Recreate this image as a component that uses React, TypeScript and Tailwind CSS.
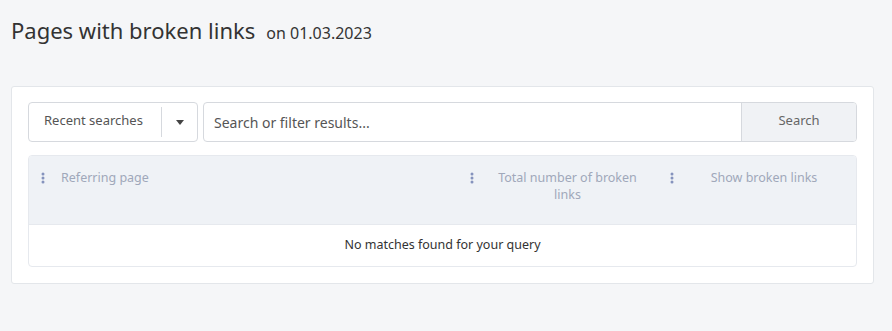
import React from 'react';

const Dots: React.FC = () => (
  <svg width="4" height="12" viewBox="0 0 4 12" className="shrink-0 mt-[3px]">
    <circle cx="2" cy="2" r="1.5" fill="#8593bd" />
    <circle cx="2" cy="6" r="1.5" fill="#8593bd" />
    <circle cx="2" cy="10" r="1.5" fill="#8593bd" />
  </svg>
);

const App: React.FC = () => {
  return (
    <div
      className="min-h-screen bg-[#f5f6f8] pl-[11px] pr-[18px] pt-[14px] text-[#333]"
      style={{ fontFamily: '"Noto Sans", "Open Sans", sans-serif' }}
    >
      <h1 className="flex items-baseline gap-[11px] leading-[32px]">
        <span className="text-[22px] text-[#333]">Pages with broken links</span>
        <span className="text-[16px] text-[#333]">on 01.03.2023</span>
      </h1>

      <div className="mt-[37px] bg-white border border-[#e3e6ea] rounded-[3px] px-[16px] pt-[15px] pb-[16px]">
        <div className="flex gap-[5px] h-[40px]">
          <div className="w-[170px] flex items-center border border-[#d6d9de] rounded-[4px] bg-white">
            <span className="flex-1 pl-[15px] pb-[2px] text-[13px] text-[#555]">Recent searches</span>
            <span className="w-px h-[30px] bg-[#d6d9de]" />
            <span className="w-[35px] flex justify-center">
              <svg width="8" height="5" viewBox="0 0 8 5">
                <path d="M0 0 L8 0 L4 5 Z" fill="#444" />
              </svg>
            </span>
          </div>
          <div className="flex-1 flex border border-[#d6d9de] rounded-[4px] overflow-hidden">
            <input
              className="flex-1 px-[10px] text-[14px] text-[#555] placeholder:text-[#555] outline-none"
              placeholder="Search or filter results..."
            />
            <button className="w-[115px] bg-[#f0f2f5] border-l border-[#d6d9de] text-[13px] text-[#666] pb-[2px]">
              Search
            </button>
          </div>
        </div>

        <div className="mt-[13px] border border-[#e6e9ee] rounded-[4px] overflow-hidden">
          <div className="flex h-[68px] bg-[#eff2f6] text-[12.5px] leading-[17px] text-[#a0a8ba] pt-[13px]">
            <div className="w-[432px] flex gap-[16px] pl-[12px]">
              <Dots />
              <span>Referring page</span>
            </div>
            <div className="w-[200px] flex pl-[9px]">
              <Dots />
              <span className="flex-1 text-center px-[14px]">Total number of broken links</span>
            </div>
            <div className="flex-1 flex pl-[9px]">
              <Dots />
              <span className="flex-1 text-center pr-[2px]">Show broken links</span>
            </div>
          </div>
          <div className="h-[42px] flex items-center justify-center border-t border-[#e6e9ee] text-[12.5px] text-[#333]">
            No matches found for your query
          </div>
        </div>
      </div>
    </div>
  );
};

export default App;
